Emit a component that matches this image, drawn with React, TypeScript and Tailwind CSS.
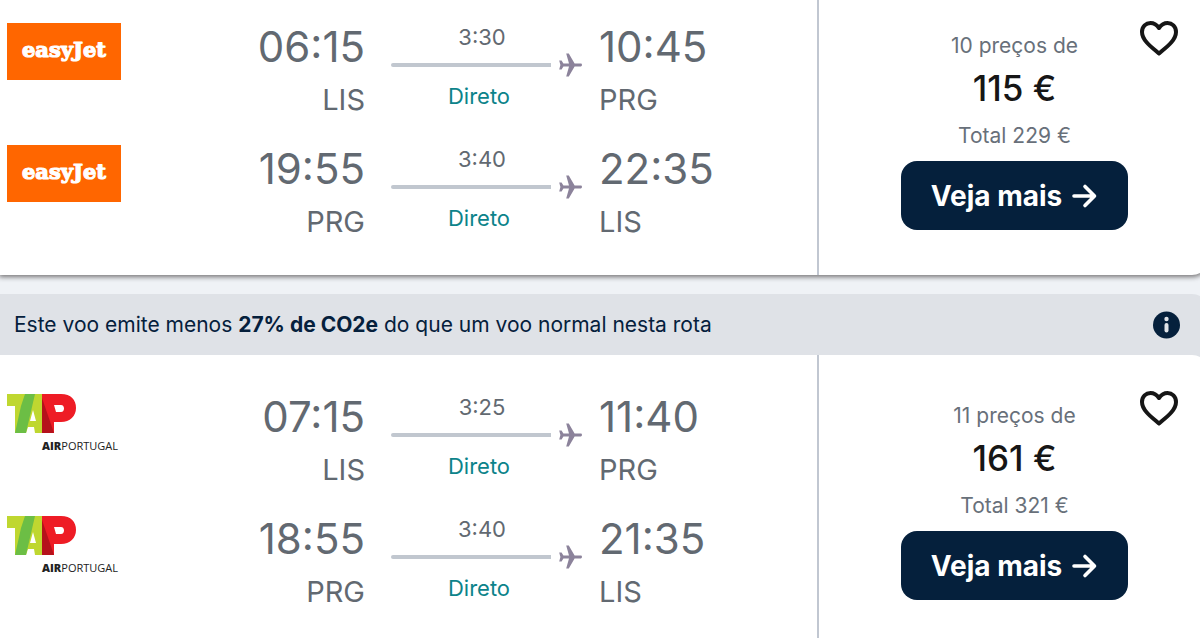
import React from "react";
import { clsx } from "clsx";

interface Leg {
  depart: string;
  from: string;
  arrive: string;
  to: string;
  duration: string;
}

interface Flight {
  airline: "easyJet" | "TAP";
  legs: Leg[];
  offers: string;
  price: string;
  total: string;
}

const flights: Flight[] = [
  {
    airline: "easyJet",
    legs: [
      { depart: "06:15", from: "LIS", arrive: "10:45", to: "PRG", duration: "3:30" },
      { depart: "19:55", from: "PRG", arrive: "22:35", to: "LIS", duration: "3:40" },
    ],
    offers: "10 preços de",
    price: "115 €",
    total: "Total 229 €",
  },
  {
    airline: "TAP",
    legs: [
      { depart: "07:15", from: "LIS", arrive: "11:40", to: "PRG", duration: "3:25" },
      { depart: "18:55", from: "PRG", arrive: "21:35", to: "LIS", duration: "3:40" },
    ],
    offers: "11 preços de",
    price: "161 €",
    total: "Total 321 €",
  },
];

const EasyJetLogo = () => (
  <svg viewBox="0 0 114 57" className="mt-[5px] h-[57px] w-[114px]" role="img" aria-label="easyJet">
    <rect width="114" height="57" fill="#ff6600" />
    <text
      x="57"
      y="34"
      textAnchor="middle"
      fontFamily="'DejaVu Serif', serif"
      fontWeight="700"
      fontSize="21"
      fill="#fff"
      stroke="#fff"
      strokeWidth="1.2"
      strokeLinejoin="round"
    >
      easyJet
    </text>
  </svg>
);

const TapLogo = () => (
  <svg viewBox="0 0 114 62" className="mt-[5px] h-[62px] w-[114px]" role="img" aria-label="TAP Air Portugal">
    <path d="M0 1H36V40H28L27 34H21L19 40H8V13H0Z" fill="#bfd730" />
    <path d="M14 13L18 1H28L19 40H8Z" fill="#6cbe45" />
    <path d="M26 17L23 28H29Z" fill="#fff" />
    <path d="M35 1H54C64 1 69 7 69 15C69 23 63 29 54 29H47V40H35Z" fill="#ee1c25" />
    <path d="M35 5L47 40H35Z" fill="#b5121b" />
    <path d="M47 12H54C58 12 58 19 54 19H49Z" fill="#fff" />
    <text x="35" y="57" fontFamily="'Open Sans', sans-serif" fontSize="11" fill="#222">
      <tspan fontWeight="800">AIR</tspan>
      <tspan fontWeight="500">PORTUGAL</tspan>
    </text>
  </svg>
);

const Plane = () => (
  <svg viewBox="0 0 24 24" className="h-6 w-6" fill="#8c839b" aria-hidden="true">
    <path d="M7.2 0.5H9.8L15.6 10.6H21.8C23.4 10.6 23.4 13.4 21.8 13.4H15.6L9.8 23.5H7.2L10 13.4H4.4L2.6 16.6H0.2L1.4 12L0.2 7.4H2.6L4.4 10.6H10Z" />
  </svg>
);

const LegRow = ({ leg, airline }: { leg: Leg; airline: Flight["airline"] }) => (
  <div className="grid h-[122px] grid-cols-[114px_244fr_234px_218fr] pl-[7px]">
    {airline === "easyJet" ? <EasyJetLogo /> : <TapLogo />}
    <div className="text-right">
      <div className="text-[42px] leading-[58px]">{leg.depart}</div>
      <div className="mt-0.5 text-[29px] leading-11">{leg.from}</div>
    </div>
    <div className="pr-4 pl-[26px] text-[22px]">
      <div className="pr-2.5 text-center leading-[38px]">{leg.duration}</div>
      <div className="flex h-[18px] items-center justify-between">
        <div className="h-1 w-40 rounded-l-full bg-[#c1c7cf]" />
        <Plane />
      </div>
      <div className="pr-4 text-center leading-11 text-[#0c838a]">Direto</div>
    </div>
    <div>
      <div className="text-[42px] leading-[58px]">{leg.arrive}</div>
      <div className="mt-0.5 text-[29px] leading-11">{leg.to}</div>
    </div>
  </div>
);

const FlightCard = ({ flight, className }: { flight: Flight; className?: string }) => (
  <article className={clsx("-mr-2 flex bg-white", className)}>
    <div className="flex-1 pt-[33px] pb-[13px] text-[#626971]">
      {flight.legs.map((leg) => (
        <LegRow key={leg.depart} leg={leg} airline={flight.airline} />
      ))}
    </div>
    <div className="grid w-[391px] grid-cols-[82px_227px_80px] border-l-2 border-[#c1c7d1]">
      <div className="col-start-2 pt-[45px] text-center text-[21px] leading-8 text-[#68707a]">
        <p>{flight.offers}</p>
        <p className="text-[35px] leading-[52px] font-medium text-[#161616]">{flight.price}</p>
        <p className="mt-1.5">{flight.total}</p>
        <button className="mt-[9px] flex h-[69px] w-full items-center justify-center gap-2 rounded-2xl bg-[#05203c] text-[28px] font-bold text-white">
          Veja mais
          <svg
            viewBox="0 0 28 28"
            className="h-7 w-7"
            fill="none"
            stroke="currentColor"
            strokeWidth="3.6"
            strokeLinecap="round"
            strokeLinejoin="round"
            aria-hidden="true"
          >
            <path d="M4 14H24M15 4.500L24.500 14L15 23.500" />
          </svg>
        </button>
      </div>
      <button aria-label="Guardar voo" className="mt-[35px] ml-2.5 h-9 w-[42px] self-start">
        <svg
          viewBox="0 0 42 36"
          className="h-9 w-[42px]"
          fill="none"
          stroke="#161616"
          strokeWidth="4"
          strokeLinejoin="round"
          aria-hidden="true"
        >
          <path d="M21 33.500C14 27.500 4 20.500 4 12C4 6.500 8 3 12.500 3C16 3 18.500 4.500 21 8C23.500 4.500 26 3 29.500 3C34 3 38 6.500 38 12C38 20.500 28 27.500 21 33.500Z" />
        </svg>
      </button>
    </div>
  </article>
);

const EmissionsBanner = () => (
  <div className="-mr-2 flex h-[61px] items-center justify-between rounded-tr-2xl bg-[#dfe2e7] pr-7 pl-3.5 text-[21px] text-[#05203c]">
    <p>
      Este voo emite menos <strong>27% de CO2e</strong> do que um voo normal nesta rota
    </p>
    <button aria-label="Mais informações">
      <svg viewBox="0 0 28 28" className="h-7 w-7" aria-hidden="true">
        <circle cx="14.5" cy="14" r="13.5" fill="#05203c" />
        <circle cx="14.5" cy="8" r="2.2" fill="#dfe2e7" />
        <rect x="12.5" y="12" width="4" height="9.5" rx="2" fill="#dfe2e7" />
      </svg>
    </button>
  </div>
);

export default function App() {
  return (
    <main className="overflow-hidden bg-[#eff2f6] font-['Inter',sans-serif]">
      <FlightCard
        flight={flights[0]}
        className="-mt-[15px] rounded-br-2xl shadow-[0_1px_5px_1px_rgba(37,32,31,0.6)]"
      />
      <section className="mt-[19px]">
        <EmissionsBanner />
        <div className="bg-[#dfe2e7]">
          <FlightCard flight={flights[1]} className="rounded-tr-2xl" />
        </div>
      </section>
    </main>
  );
}
